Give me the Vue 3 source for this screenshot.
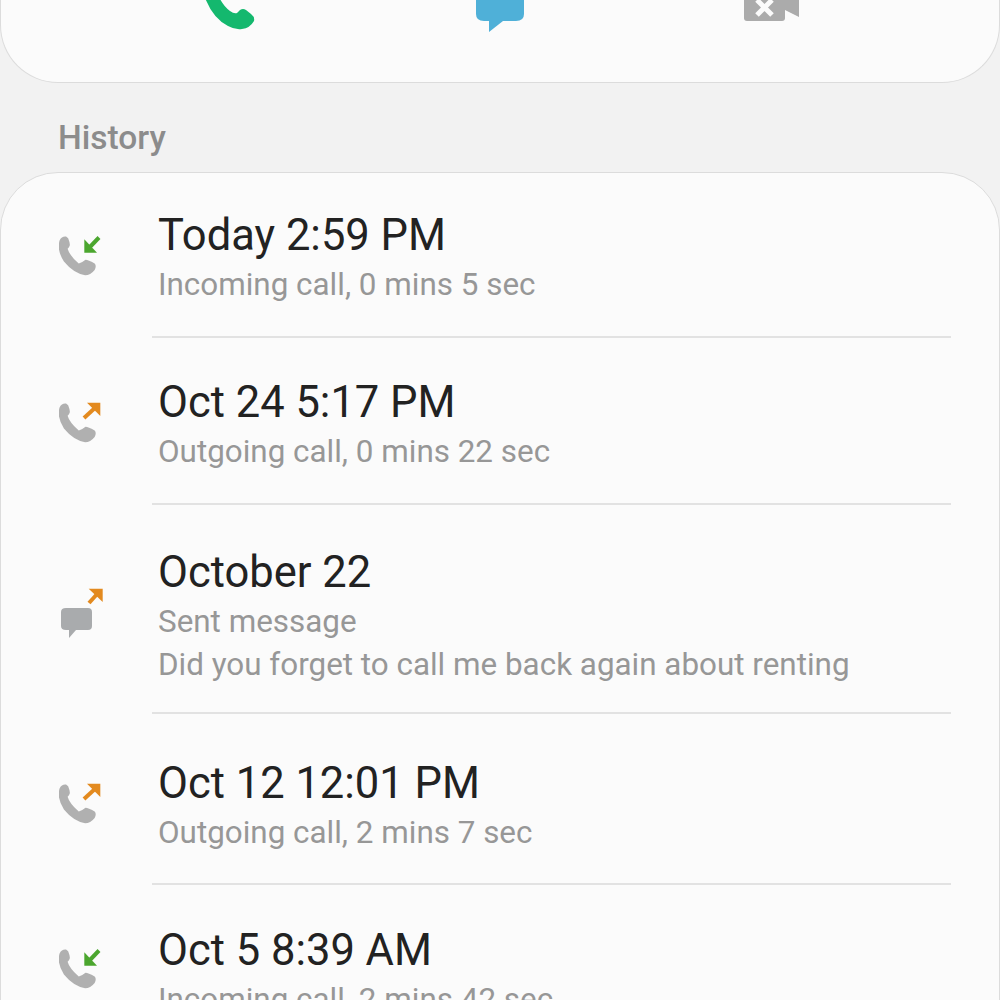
<script setup>
const PHONE = 'M3 5Q5 1 9 1.5L11 3Q13 8 12.5 10Q12 12 10.5 13Q12 19 21 27Q24 26 27 23.5Q29 23 36 27Q38 29 36 33Q32 38 27 38Q16 36 7 25Q0 14 3 5Z'
const rows = [
  { id: 1, type: 'in', title: 'Today 2:59 PM', lines: ['Incoming call, 0 mins 5 sec'] },
  { id: 2, type: 'out', title: 'Oct 24 5:17 PM', lines: ['Outgoing call, 0 mins 22 sec'] },
  { id: 3, type: 'msg', title: 'October 22', lines: ['Sent message', 'Did you forget to call me back again about renting'] },
  { id: 4, type: 'out', title: 'Oct 12 12:01 PM', lines: ['Outgoing call, 2 mins 7 sec'] },
  { id: 5, type: 'in', title: 'Oct 5 8:39 AM', lines: ['Incoming call, 2 mins 42 sec'] },
]
</script>

<template>
  <div class="page">
    <section class="actions">
      <div class="action">
        <svg class="big-phone" width="60" height="40" viewBox="0 0 60 40">
          <path d="M4 0Q12 23 28 31Q35 35 42 34Q50 33 54 26Q55 22 51 19L46 15Q43 13 40 15L37 18Q34 19 30 16Q23 11 18 0Z" fill="#14b86e" />
        </svg>
      </div>
      <div class="action">
        <svg class="big-msg" width="52" height="62" viewBox="0 0 52 62">
          <path d="M9 0H43Q50 0 50 7V44Q50 51 42 51H29L15 62V51H10Q2 51 2 44V7Q2 0 9 0Z" fill="#4fb0d8" />
        </svg>
      </div>
      <div class="action">
        <svg class="big-video" width="56" height="40" viewBox="0 0 56 40">
          <path d="M3 0H38Q41 0 41 3V37Q41 40 38 40H3Q0 40 0 37V3Q0 0 3 0Z" fill="#ababab" />
          <path d="M41 10V29L55 36V0Z" fill="#ababab" />
          <path d="M13 19L28 34M28 19L13 34" stroke="#fbfbfb" stroke-width="5" />
        </svg>
      </div>
    </section>

    <h2 class="heading">History</h2>

    <section class="card">
      <article v-for="row in rows" :key="row.id" class="row" :class="'row-' + row.id">
        <div class="icon">
          <svg v-if="row.type === 'in'" width="46" height="44" viewBox="0 0 46 44">
            <path :d="PHONE" transform="translate(-2.5 1) scale(1.06)" fill="#b0b0b0" />
            <path d="M29 15L40 3.5" fill="none" stroke="#4ba62e" stroke-width="4" />
            <path d="M25.3 5.3V18.7H38Z" fill="#4ba62e" />
          </svg>
          <svg v-else-if="row.type === 'out'" width="46" height="44" viewBox="0 0 46 44">
            <path :d="PHONE" transform="translate(-2.5 2) scale(1.06)" fill="#b0b0b0" />
            <path d="M37 7L25 18" fill="none" stroke="#e38a1f" stroke-width="4" />
            <path d="M28 2.7H41.3V16Z" fill="#e38a1f" />
          </svg>
          <svg v-else width="46" height="58" viewBox="0 0 46 58">
            <path d="M7 27H29Q33 27 33 31V45Q33 49 29 49H17L10 57V49H7Q2 49 2 45V31Q2 27 7 27Z" fill="#a9abad" />
            <path d="M39 12L30 22" fill="none" stroke="#e38a1f" stroke-width="4" />
            <path d="M29.7 7.7H43.7V21Z" fill="#e38a1f" />
          </svg>
        </div>
        <div class="content">
          <h3 class="title">{{ row.title }}</h3>
          <p v-for="line in row.lines" :key="line" class="sub">{{ line }}</p>
        </div>
      </article>
    </section>
  </div>
</template>

<style scoped>
.page {
  height: 1000px;
  overflow: hidden;
  background: #f2f2f2;
  font-family: Roboto, "Liberation Sans", sans-serif;
}
.actions {
  box-sizing: border-box;
  height: 83px;
  display: flex;
  justify-content: center;
  background: #fbfbfb;
  border: 1px solid #dcdcdc;
  border-top: 0;
  border-radius: 0 0 58px 58px;
}
.action {
  width: 272px;
  height: 82px;
  display: flex;
  justify-content: center;
  align-items: flex-end;
}
.big-phone { margin: 0 0 47px 4px; flex: none; }
.big-msg { margin-bottom: 50px; flex: none; }
.big-video { margin-bottom: 61px; flex: none; }
.heading {
  margin: 0;
  padding: 35px 0 14px 58px;
  font-size: 33.5px;
  line-height: 40px;
  font-weight: 500;
  color: #8c8c8c;
}
.card {
  background: #fbfbfb;
  border: 1px solid #dcdcdc;
  border-radius: 58px 58px 0 0;
  height: 900px;
}
.row {
  display: flex;
  align-items: center;
}
.icon {
  flex: none;
  width: 93px;
  padding-left: 58px;
  display: flex;
}
.content {
  flex: 1;
  margin-right: 48px;
  border-bottom: 2px solid #e2e2e2;
  padding-left: 6px;
}
.row-1 .content { padding-top: 36px; padding-bottom: 30px; }
.row-2 .content { padding-top: 38px; padding-bottom: 30px; }
.row-3 .content { padding-top: 41px; padding-bottom: 26px; }
.row-4 .content { padding-top: 43px; padding-bottom: 29px; }
.row-4 .icon { margin-top: 6px; }
.row-5 .content { padding-top: 39px; padding-bottom: 30px; }
.title {
  margin: 0;
  font-size: 43.5px;
  line-height: 54px;
  font-weight: 400;
  color: #222;
}
.sub {
  margin: 0;
  font-size: 31.4px;
  line-height: 43px;
  color: #979797;
}
</style>
